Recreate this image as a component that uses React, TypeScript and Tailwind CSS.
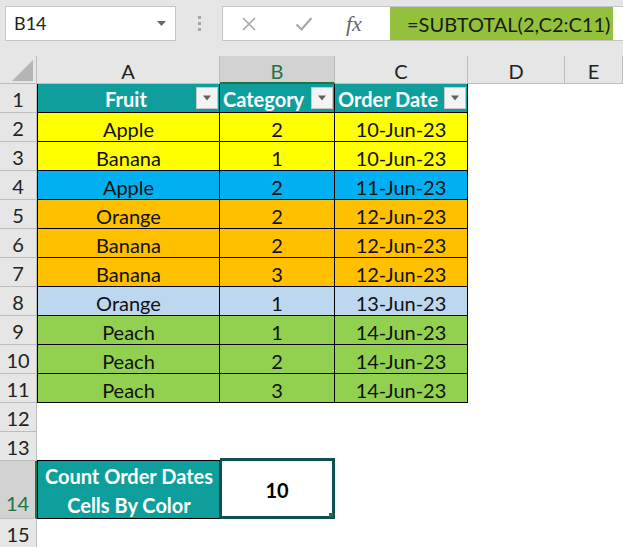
import React from "react";

type Row = { fruit: string; cat: string; date: string; bg: string };

const rows: Row[] = [
  { fruit: "Apple", cat: "2", date: "10-Jun-23", bg: "bg-[#ffff00]" },
  { fruit: "Banana", cat: "1", date: "10-Jun-23", bg: "bg-[#ffff00]" },
  { fruit: "Apple", cat: "2", date: "11-Jun-23", bg: "bg-[#00b0f0]" },
  { fruit: "Orange", cat: "2", date: "12-Jun-23", bg: "bg-[#ffc000]" },
  { fruit: "Banana", cat: "2", date: "12-Jun-23", bg: "bg-[#ffc000]" },
  { fruit: "Banana", cat: "3", date: "12-Jun-23", bg: "bg-[#ffc000]" },
  { fruit: "Orange", cat: "1", date: "13-Jun-23", bg: "bg-[#bdd7ee]" },
  { fruit: "Peach", cat: "1", date: "14-Jun-23", bg: "bg-[#92d050]" },
  { fruit: "Peach", cat: "2", date: "14-Jun-23", bg: "bg-[#92d050]" },
  { fruit: "Peach", cat: "3", date: "14-Jun-23", bg: "bg-[#92d050]" },
];

const font = { fontFamily: "Lato, 'Liberation Sans', sans-serif" };

function FilterButton() {
  return (
    <div className="absolute right-[1px] top-[3px] flex h-[22px] w-[22px] items-center justify-center border border-[#c8c8c8] bg-[#f4f4f4]">
      <svg width="10" height="6" viewBox="0 0 10 6">
        <path d="M1 0.5 L9 0.5 L5 5.5 Z" fill="#606060" />
      </svg>
    </div>
  );
}

function RowHead({ n, selected, tall }: { n: number; selected?: boolean; tall?: boolean }) {
  return (
    <div
      className={`flex justify-center border-b border-r text-[20px] leading-none ${
        tall ? "items-end pb-[5px]" : "items-center pt-[2px]"
      } ${
        selected
          ? "border-b-[#bdbdbd] border-r-2 border-r-[#217346] bg-[#d2d2d2] text-[#217346]"
          : "border-[#bdbdbd] bg-[#e6e6e6] text-[#222]"
      }`}
    >
      {n}
    </div>
  );
}

export default function App() {
  return (
    <div className="h-[547px] w-[623px] overflow-hidden bg-white" style={font}>
      {/* formula bar */}
      <div className="flex h-[56px] items-start overflow-hidden bg-[#e6e6e6] pt-[6px]">
        <div className="ml-[5px] flex h-[35px] w-[171px] shrink-0 items-center justify-between border border-[#c6c6c6] bg-white pl-[8px] pr-[9px]">
          <span className="text-[18px] text-[#222]">B14</span>
          <svg width="9" height="5" viewBox="0 0 9 5">
            <path d="M0 0 L9 0 L4.5 5 Z" fill="#666" />
          </svg>
        </div>
        <div className="flex h-[35px] w-[46px] shrink-0 flex-col items-center justify-center gap-[3px]">
          <div className="h-[3px] w-[3px] bg-[#a6a6a6]" />
          <div className="h-[3px] w-[3px] bg-[#a6a6a6]" />
          <div className="h-[3px] w-[3px] bg-[#a6a6a6]" />
        </div>
        <div className="flex h-[35px] w-[430px] shrink-0 border border-[#c6c6c6] bg-white">
          <div className="flex w-[167px] items-center">
            <svg className="ml-[18px]" width="16" height="16" viewBox="0 0 16 16">
              <path d="M2 2 L14 14 M14 2 L2 14" stroke="#a8a8a8" strokeWidth="1.6" fill="none" />
            </svg>
            <svg className="ml-[38px]" width="18" height="16" viewBox="0 0 18 16">
              <path d="M1.5 8.5 L6.5 13.5 L16.5 2" stroke="#a8a8a8" strokeWidth="2.2" fill="none" />
            </svg>
            <span
              className="ml-[33px] text-[22px] italic text-[#666]"
              style={{ fontFamily: "'Liberation Serif', serif" }}
            >
              fx
            </span>
          </div>
          <div className="flex w-[223px] items-center bg-[#93c13c] pl-[17px] text-[20px] text-[#1a1a1a]">
            =SUBTOTAL(2,C2:C11)
          </div>
        </div>
      </div>

      {/* grid */}
      <div className="grid grid-cols-[37px_183px_115px_133px_97px_1fr] grid-rows-[28px_repeat(13,29px)_58px_29px]">
        {/* column headers */}
        <div className="relative border-b border-r border-[#bdbdbd] bg-[#e6e6e6]">
          <svg className="absolute bottom-[2px] right-[3px]" width="21" height="21" viewBox="0 0 21 21">
            <path d="M21 0 L21 21 L0 21 Z" fill="#b4b4b4" />
          </svg>
        </div>
        {["A", "B", "C", "D", "E"].map((c) =>
          c === "B" ? (
            <div
              key={c}
              className="flex items-center justify-center border-b-2 border-r border-b-[#217346] border-r-[#bdbdbd] bg-[#d2d2d2] pt-[3px] text-[20px] text-[#217346]"
            >
              {c}
            </div>
          ) : (
            <div
              key={c}
              className="flex items-center justify-center border-b border-r border-[#bdbdbd] bg-[#e6e6e6] pt-[2px] text-[20px] text-[#222]"
            >
              {c}
            </div>
          )
        )}

        {/* row 1 */}
        <RowHead n={1} />
        <div className="relative flex items-center justify-center border-b border-l border-r border-black bg-[#0e9f9c] pr-[5px] pt-[2px] text-[20px] font-bold text-white">
          Fruit
          <FilterButton />
        </div>
        <div className="relative flex items-center border-b border-r border-black bg-[#0e9f9c] pl-[3px] pt-[2px] text-[20px] font-bold text-white">
          Category
          <FilterButton />
        </div>
        <div className="relative flex items-center border-b border-r border-black bg-[#0e9f9c] pl-[3px] pt-[2px] text-[20px] font-bold text-white">
          Order Date
          <FilterButton />
        </div>
        <div />
        <div />

        {rows.map((r, i) => (
          <React.Fragment key={i}>
            <RowHead n={i + 2} />
            <div className={`flex items-center justify-center border-b border-l border-r border-black pt-[3px] text-[20px] text-[#111] ${r.bg}`}>
              {r.fruit}
            </div>
            <div className={`flex items-center justify-center border-b border-r border-black pt-[3px] text-[20px] text-[#111] ${r.bg}`}>
              {r.cat}
            </div>
            <div className={`flex items-center justify-center border-b border-r border-black pt-[3px] text-[20px] text-[#111] ${r.bg}`}>
              {r.date}
            </div>
            <div />
            <div />
          </React.Fragment>
        ))}

        <RowHead n={12} />
        <div />
        <div />
        <div />
        <div />
        <div />
        <RowHead n={13} />
        <div className="border-b border-black" />
        <div className="border-b-[3px] border-[#0f4f52]" />
        <div />
        <div />
        <div />

        {/* row 14 */}
        <RowHead n={14} selected tall />
        <div className="flex flex-col items-center justify-center border-b border-l border-black bg-[#0e9f9c] pt-[2px] text-[20px] font-bold leading-[29px] text-white">
          <span>Count Order Dates</span>
          <span>Cells By Color</span>
        </div>
        <div className="relative -ml-[1px] flex items-center justify-center border-x-[3px] border-b-[3px] border-[#0f4f52] bg-white pt-[2px] text-[20px] font-bold text-black">
          10
          <div className="absolute bottom-[-1px] right-[-1px] h-[4px] w-[4px] bg-[#217346]" />
        </div>
        <div />
        <div />
        <div />

        <RowHead n={15} />
        <div />
        <div />
        <div />
        <div />
        <div />
      </div>
    </div>
  );
}
